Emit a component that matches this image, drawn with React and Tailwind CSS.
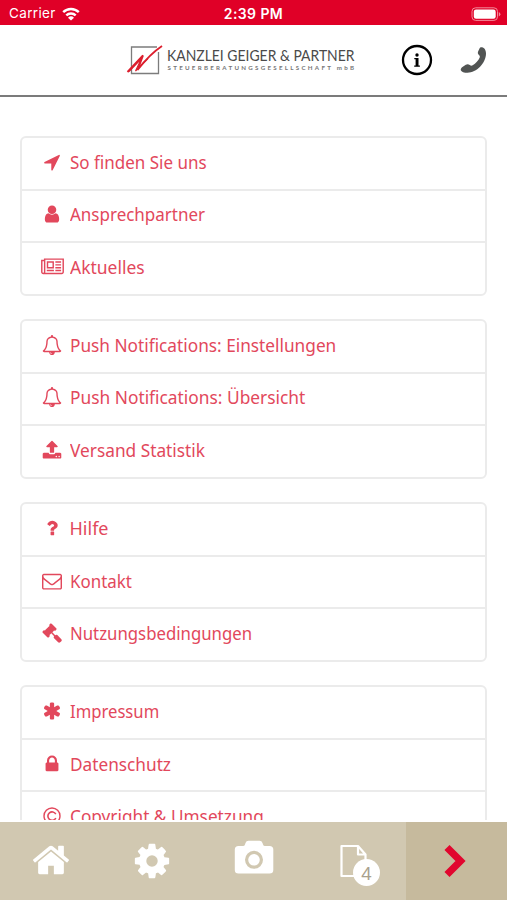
import React from 'react'

const paths = {
  arrow: 'M1593 349l-640 1280q-17 35-57 35-5 0-15-2-22-5-35.5-22.5t-13.5-39.5v-576h-576q-22 0-39.5-13.5t-22.5-35.5 4-42 29-30l1280-640q13-7 29-7 27 0 45 19 15 14 18.5 34.5t-6.5 39.5z',
  user: 'M1536 1399q0 109-62.5 187t-150.5 78h-854q-88 0-150.5-78t-62.5-187q0-85 8.5-160.5t31.5-152 58.5-131 94-89 134.5-34.5q131 128 313 128t313-128q76 0 134.5 34.5t94 89 58.5 131 31.5 152 8.5 160.5zm-256-887q0 159-112.5 271.5t-271.5 112.5-271.5-112.5-112.5-271.5 112.5-271.5 271.5-112.5 271.5 112.5 112.5 271.5z',
  news: 'M1024 512h-384v384h384v-384zm128 640v128h-640v-128h640zm0-768v640h-640v-640h640zm640 768v128h-512v-128h512zm0-256v128h-512v-128h512zm0-256v128h-512v-128h512zm0-256v128h-512v-128h512zm-1536 960v-960h-128v960q0 26 19 45t45 19 45-19 19-45zm1664 0v-1088h-1536v1088q0 33-11 64h1483q26 0 45-19t19-45zm128-1216v1216q0 80-56 136t-136 56h-1664q-80 0-136-56t-56-136v-1088h256v-128h1792z',
  bell: 'M912 1696q0-16-16-16-59 0-101.5-42.5t-42.5-101.5q0-16-16-16t-16 16q0 73 51.5 124.5t124.5 51.5q16 0 16-16zm-666-288h1300q-266-300-266-832 0-51-24-105t-69-103-121.5-80.5-169.5-31.5-169.5 31.5-121.5 80.5-69 103-24 105q0 532-266 832zm1482 0q0 52-38 90t-90 38h-448q0 106-75 181t-181 75-181-75-75-181h-448q-52 0-90-38t-38-90q50-42 91-88t85-119.5 74.5-158.5 50-206 19.5-260q0-152 117-282.5t307-158.5q-8-19-8-39 0-40 28-68t68-28 68 28 28 68q0 20-8 39 190 28 307 158.5t117 282.5q0 139 19.5 260t50 206 74.5 158.5 85 119.5 91 88z',
  upload: 'M1344 1472q0-26-19-45t-45-19-45 19-19 45 19 45 45 19 45-19 19-45zm256 0q0-26-19-45t-45-19-45 19-19 45 19 45 45 19 45-19 19-45zm128-224v320q0 40-28 68t-68 28h-1472q-40 0-68-28t-28-68v-320q0-40 28-68t68-28h427q21 56 70.5 92t110.5 36h256q61 0 110.5-36t70.5-92h427q40 0 68 28t28 68zm-325-648q-17 40-59 40h-256v448q0 26-19 45t-45 19h-256q-26 0-45-19t-19-45v-448h-256q-42 0-59-40-17-39 14-69l448-448q18-19 45-19t45 19l448 448q31 30 14 69z',
  question: 'M1088 1256v240q0 16-12 28t-28 12h-240q-16 0-28-12t-12-28v-240q0-16 12-28t28-12h240q16 0 28 12t12 28zm316-600q0 54-15.5 101t-35 76.5-55 59.5-57.5 43.5-61 35.5q-41 23-68.5 65t-27.5 67q0 17-12 32.5t-28 15.5h-240q-15 0-25.5-18.5t-10.5-37.5v-45q0-83 65-156.5t143-108.5q59-27 84-56t25-76q0-42-46.5-74t-107.5-32q-65 0-108 29-35 25-107 115-13 16-31 16-12 0-25-8l-164-125q-13-10-15.5-25t5.5-28q160-266 464-266 80 0 161 31t146 83 106 127.5 41 158.5z',
  mail: 'M1664 1504v-768q-32 36-69 66-268 206-426 338-51 43-83 67t-86.5 48.5-102.5 24.5h-2q-48 0-102.5-24.5t-86.5-48.5-83-67q-158-132-426-338-37-30-69-66v768q0 13 9.5 22.5t22.5 9.5h1472q13 0 22.5-9.5t9.5-22.5zm0-1051v-24.5l-.5-13-3-12.5-5.5-9-9-7.5-14-2.5h-1472q-13 0-22.5 9.5t-9.5 22.5q0 168 147 284 193 152 401 317 6 5 35 29.5t46 37.5 44.5 31.5 50.5 27.5 43 9h2q20 0 43-9t50.5-27.5 44.5-31.5 46-37.5 35-29.5q208-165 401-317 54-43 100.5-115.5t46.5-131.5zm128-37v1088q0 66-47 113t-113 47h-1472q-66 0-113-47t-47-113v-1088q0-66 47-113t113-47h1472q66 0 113 47t47 113z',
  gavel: 'M1771 1536q0 53-37 90l-107 108q-39 37-91 37-53 0-90-37l-363-364q-38-36-38-90 0-53 43-96l-256-256-126 126q-14 14-34 14t-34-14q2 2 12.5 12t12.5 13 10 11.5 10 13.5 6 13.5 5.5 16.5 1.5 18q0 38-28 68-3 3-16.5 18t-19 20.5-18.5 16.5-22 15.5-22 9-26 4.5q-40 0-68-28l-408-408q-28-28-28-68 0-13 4.5-26t9-22 15.5-22 16.5-18.5 20.5-19 18-16.5q30-28 68-28 10 0 18 1.5t16.5 5.5 13.5 6 13.5 10 11.5 10 13 12.5 12 12.5q-14-14-14-34t14-34l348-348q14-14 34-14t34 14q-2-2-12.5-12t-12.5-13-10-11.5-10-13.5-6-13.5-5.5-16.5-1.5-18q0-38 28-68 3-3 16.5-18t19-20.5 18.5-16.5 22-15.5 22-9 26-4.5q40 0 68 28l408 408q28 28 28 68 0 13-4.5 26t-9 22-15.5 22-16.5 18.5-20.5 19-18 16.5q-30 28-68 28-10 0-18-1.5t-16.5-5.5-13.5-6-13.5-10-11.5-10-13-12.5-12-12.5q14 14 14 34t-14 34l-126 126 256 256q43-43 96-43 52 0 91 37l363 363q37 39 37 91z',
  asterisk: 'M1546 1050q46 26 59.5 77.5t-12.5 97.5l-64 110q-26 46-77.5 59.5t-97.5-12.5l-266-153v307q0 52-38 90t-90 38h-128q-52 0-90-38t-38-90v-307l-266 153q-46 26-97.5 12.5t-77.5-59.5l-64-110q-26-46-12.5-97.5t59.5-77.5l266-154-266-154q-46-26-59.5-77.5t12.5-97.5l64-110q26-46 77.5-59.5t97.5 12.5l266 153v-307q0-52 38-90t90-38h128q52 0 90 38t38 90v307l266-153q46-26 97.5-12.5t77.5 59.5l64 110q26 46 12.5 97.5t-59.5 77.5l-266 154z',
  lock: 'M640 768h512v-192q0-106-75-181t-181-75-181 75-75 181v192zm832 96v576q0 40-28 68t-68 28h-960q-40 0-68-28t-28-68v-576q0-40 28-68t68-28h32v-192q0-184 132-316t316-132 316 132 132 316v192h32q40 0 68 28t28 68z',
  home: 'M1472 992v480q0 26-19 45t-45 19h-384v-384h-256v384h-384q-26 0-45-19t-19-45v-480q0-1 .5-3t.5-3l575-474 575 474q1 2 1 6zm223-69l-62 74q-8 9-21 11h-3q-13 0-21-7l-692-577-692 577q-12 8-24 7-13-2-21-11l-62-74q-8-10-7-23.5t11-21.5l719-599q32-26 76-26t76 26l244 204v-195q0-14 9-23t23-9h192q14 0 23 9t9 23v408l219 182q10 8 11 21.5t-7 23.5z',
  cog: 'M1152 896q0-106-75-181t-181-75-181 75-75 181 75 181 181 75 181-75 75-181zm512-109v222q0 12-8 23t-20 13l-185 28q-19 54-39 91 35 50 107 138 10 12 10 25t-9 23q-27 37-99 108t-94 71q-12 0-26-9l-138-108q-44 23-91 38-16 136-29 186-7 28-36 28h-222q-14 0-24.5-8.5t-11.5-21.5l-28-184q-49-16-90-37l-141 107q-10 9-25 9-14 0-25-11-126-114-165-168-7-10-7-23 0-12 8-23 15-21 51-66.5t54-70.5q-27-50-41-99l-183-27q-13-2-21-12.5t-8-23.5v-222q0-12 8-23t19-13l186-28q14-46 39-92-40-57-107-138-10-12-10-24 0-10 9-23 26-36 98.5-107.5t94.5-71.5q13 0 26 10l138 107q44-23 91-38 16-136 29-186 7-28 36-28h222q14 0 24.5 8.5t11.5 21.5l28 184q49 16 90 37l142-107q9-9 24-9 13 0 25 10 129 119 165 170 7 8 7 22 0 12-8 23-15 21-51 66.5t-54 70.5q26 50 41 98l183 28q13 2 21 12.5t8 23.5z',
}

const groups = [
  [
    { icon: 'arrow', label: 'So finden Sie uns', fit: 'scale-x-[0.944]' },
    { icon: 'user', label: 'Ansprechpartner', fit: 'scale-x-[0.944]' },
    { icon: 'news', label: 'Aktuelles', fit: 'scale-x-[0.97]' },
  ],
  [
    { icon: 'bell', label: 'Push Notifications: Einstellungen', fit: 'scale-x-[0.958]' },
    { icon: 'bell', label: 'Push Notifications: Übersicht', fit: 'scale-x-[0.963]' },
    { icon: 'upload', label: 'Versand Statistik', fit: 'scale-x-[0.96]' },
  ],
  [
    { icon: 'question', label: 'Hilfe', fit: 'scale-x-100' },
    { icon: 'mail', label: 'Kontakt', fit: 'scale-x-[0.94]' },
    { icon: 'gavel', label: 'Nutzungsbedingungen', fit: 'scale-x-[0.932]' },
  ],
  [
    { icon: 'asterisk', label: 'Impressum', fit: 'scale-x-[0.925]' },
    { icon: 'lock', label: 'Datenschutz', fit: 'scale-x-[0.957]' },
    { icon: 'copyright', label: 'Copyright & Umsetzung', fit: 'scale-x-[0.957]' },
  ],
]

const Icon = ({ name, className }) => {
  if (name === 'copyright') {
    return (
      <svg viewBox="0 0 20 20" className={className} fill="none" stroke="currentColor" strokeWidth="1.4">
        <circle cx="10" cy="10" r="8" />
        <path d="M13.8 8.1a4.2 4.2 0 1 0 0 3.9" strokeWidth="1.6" />
      </svg>
    )
  }
  return (
    <svg
      viewBox={name === 'news' ? '0 0 2048 1792' : '0 0 1792 1792'}
      className={className}
      fill="currentColor"
    >
      <path d={paths[name]} />
    </svg>
  )
}

const StatusBar = () => (
  <div className="grid h-[25px] shrink-0 grid-cols-3 items-center bg-[#e00027] pt-[3px] font-[Inter,sans-serif] text-[13.5px] leading-none text-white">
    <div className="flex items-center gap-1.5 pl-[9px] tracking-[0.35px]">
      <span>Carrier</span>
      <svg viewBox="0 0 18 14" className="h-[14px] w-[18px]" fill="none" stroke="currentColor" strokeWidth="2.4">
        <path d="M1.2 5.2a11 11 0 0 1 15.6 0" />
        <path d="M4.3 8.4a6.7 6.7 0 0 1 9.4 0" />
        <path d="M9 13.6L6 10.7a4.3 4.3 0 0 1 6 0z" fill="currentColor" stroke="none" />
      </svg>
    </div>
    <div className="text-center text-[14px] font-semibold tracking-[0.4px]">2:39 PM</div>
    <div className="flex justify-end pr-[6px]">
      <svg viewBox="0 0 30 14" className="h-[14px] w-[30px]">
        <rect x="1" y="0.8" width="25.5" height="12.6" rx="3.6" fill="none" stroke="#f28a9a" />
        <rect x="2.8" y="2.5" width="21.9" height="9.2" rx="2.2" fill="#fff" />
        <path d="M27.8 5v4.4q1.6-.7 1.6-2.2T27.8 5z" fill="#f28a9a" />
      </svg>
    </div>
  </div>
)

const Header = () => (
  <header className="flex h-[72px] shrink-0 items-center border-b-2 border-[#7b7b7b] pl-[126px]">
    <svg viewBox="0 0 37 32" className="h-8 w-[37px] shrink-0">
      <path d="M32.5 8v21.5H5.5V3H31" fill="none" stroke="#7c7c7c" strokeWidth="1.3" />
      <path d="M1.500 28L17 11.500 11.500 26C20 15 27 8 36 2" fill="none" stroke="#dc1f2e" strokeWidth="1.9" strokeLinejoin="bevel" />
      <path d="M3 27.500L15.500 14.500 9.500 27 22 14.500" fill="none" stroke="#dc1f2e" strokeWidth="1.2" />
    </svg>
    <svg viewBox="0 0 196 28" className="-mr-1.5 ml-[4px] h-7 w-[196px] shrink-0 overflow-visible">
      <text x="0" y="15.3" textLength="187.5" lengthAdjust="spacingAndGlyphs" fill="#4a4a4a" fontFamily="Lato, sans-serif" fontSize="15">
        KANZLEI GEIGER &amp; PARTNER
      </text>
      <text x="0.5" y="24.4" textLength="186.5" fill="#777" fontFamily="Lato, sans-serif" fontWeight="700" fontSize="6.2">
        STEUERBERATUNGSGESELLSCHAFT mbB
      </text>
    </svg>
    <svg viewBox="0 0 32 32" className="ml-[43.5px] h-8 w-8 shrink-0">
      <circle cx="16" cy="16" r="14" fill="none" stroke="#000" strokeWidth="2.3" />
      <circle cx="16" cy="11" r="1.7" />
      <path d="M13.3 14h4.200v7.400h1.400v1.300h-5.700v-1.300h1.400v-6.100h-1.300z" />
    </svg>
    <svg viewBox="0 0 28 28" className="ml-[27px] h-7 w-7 shrink-0" fill="#515453">
      <path d="M22 1.300c2.500.3 4 3 4 6.300 0 9.500-9.500 19.200-18.500 19.200-3.300 0-6.200-1-6.700-2.600-.3-1 .4-2.300 2-3.400l3-2c1.500-.9 2.700-.7 4 .3 1 .8 1.800.9 2.900.2 3-1.900 5.800-4.900 7-7.800.4-1 .1-1.700-.8-2.500-1.200-1.100-1.300-2.200-.7-3.700l1.200-2.600c.5-1.100 1.400-1.600 2.600-1.400z" />
    </svg>
  </header>
)

const MenuGroup = ({ items }) => (
  <ul className="shrink-0 divide-y-2 divide-[#ebebeb] rounded-md border-2 border-[#ebebeb]">
    {items.map((item, idx) => (
      <li key={idx} className="flex h-[52.6px] items-center pb-[3px] pl-[17px] text-[#e2485c] last:h-[50.6px]">
        <span className="flex w-[26px] justify-center">
          <Icon name={item.icon} className={item.icon === 'news' ? 'h-5 w-[23px] shrink-0' : 'size-5 shrink-0'} />
        </span>
        <span className={`ml-[4.5px] origin-left text-lg whitespace-nowrap ${item.fit}`}>{item.label}</span>
      </li>
    ))}
  </ul>
)

const TabBar = () => (
  <nav className="grid h-[78px] shrink-0 grid-cols-[101px_102px_101px_102px_101px] bg-[#d1c8b1] text-white">
    <button className="flex items-center justify-center">
      <Icon name="home" className="mb-0.5 size-10" />
    </button>
    <button className="flex items-center justify-center">
      <Icon name="cog" className="mb-px size-10" />
    </button>
    <button className="flex items-center justify-center">
      <svg viewBox="0 0 40 34" className="mb-2 h-[34px] w-10" fill="currentColor" fillRule="evenodd">
        <path d="M4.500 6H9q1.500 0 2-1.500l.5-1.500Q12.200.8 14.500.8h11q2.300 0 3 2.200l.5 1.500Q29.500 6 31 6h4.500q3.800 0 3.800 3.500V30q0 3.500-3.800 3.500h-31Q.8 33.500.8 30V9.500Q.8 6 4.500 6zM20 10.800a9 9 0 1 0 0 18 9 9 0 0 0 0-18zm0 3.200a5.800 5.800 0 1 1 0 11.600A5.800 5.800 0 0 1 20 14z" />
      </svg>
    </button>
    <button className="flex items-center justify-center">
      <span className="relative -ml-[3px]">
        <svg viewBox="0 0 29 34" className="h-[34px] w-[29px]" fill="none" stroke="currentColor" strokeWidth="2.2">
          <path d="M2.500 2H19l7.500 8.500V32h-24zM19 2v8.500h7.500" strokeLinejoin="round" />
        </svg>
        <span className="absolute top-[15px] left-[14px] flex size-[27px] items-center justify-center rounded-full bg-white text-lg leading-none text-[#a9a18d]">
          4
        </span>
      </span>
    </button>
    <button className="flex items-center justify-center bg-[#c6ba9d] pr-[3px]">
      <svg viewBox="0 0 24 34" className="h-[34px] w-6" fill="none" stroke="#e1062e" strokeWidth="7.2">
        <path d="M4 3.500L17.500 17 4 30.500" />
      </svg>
    </button>
  </nav>
)

const App = () => {
  return (
    <div className="flex h-[900px] w-[507px] flex-col overflow-hidden bg-white font-['Noto_Sans',sans-serif]">
      <StatusBar />
      <Header />
      <main className="mb-0.5 flex min-h-0 flex-1 flex-col gap-[23.3px] overflow-hidden px-5 pt-[39px]">
        {groups.map((items, idx) => (
          <MenuGroup key={idx} items={items} />
        ))}
      </main>
      <TabBar />
    </div>
  )
}

export default App
